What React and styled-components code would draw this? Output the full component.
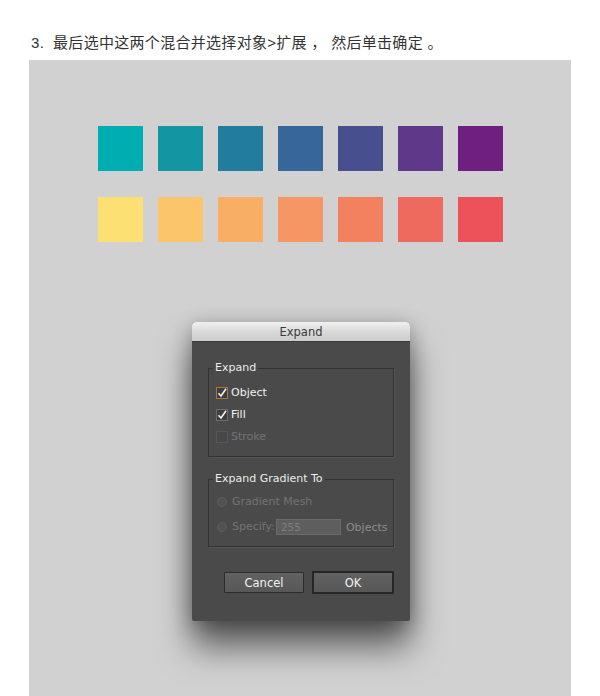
import React from "react";
import styled, { createGlobalStyle } from "styled-components";

const GlobalStyle = createGlobalStyle`
  body {
    margin: 0;
    background: #ffffff;
  }
`;

const topRow = ["#00adb0", "#1495a2", "#227c9e", "#37679a", "#474f8e", "#5f388a", "#6e1f80"];
const bottomRow = ["#fde073", "#fbc56c", "#f9ae65", "#f59664", "#f3815f", "#ef6a5e", "#ed525a"];

const Page = styled.div`
  padding: 34px 29px 0 29px;
`;

const Heading = styled.p`
  margin: 0 0 8px 2px;
  font-family: "Liberation Sans", "Noto Sans CJK SC", sans-serif;
  font-size: 15px;
  line-height: 18px;
  letter-spacing: 0.3px;
  color: #333333;
  white-space: pre;
`;

const Panel = styled.div`
  width: 542px;
  min-height: 636px;
  background: #d1d1d1;
  padding-top: 66px;
  box-sizing: border-box;
  display: flex;
  flex-direction: column;
  align-items: center;
`;

const SwatchGrid = styled.div`
  display: grid;
  grid-template-columns: repeat(7, 45px);
  grid-auto-rows: 45px;
  column-gap: 15px;
  row-gap: 26px;
  margin-left: 1px;
`;

const Swatch = styled.div`
  background: ${(p) => p.$color};
`;

const Dialog = styled.div`
  margin-top: 80px;
  margin-left: 2px;
  width: 218px;
  background: #4a4a4a;
  border-radius: 4px 4px 2px 2px;
  box-shadow: 0 26px 34px rgba(0, 0, 0, 0.55), 0 4px 20px rgba(0, 0, 0, 0.3);
  font-family: "DejaVu Sans", sans-serif;
  font-size: 11px;
  overflow: hidden;
`;

const TitleBar = styled.div`
  height: 20px;
  line-height: 20px;
  text-align: center;
  color: #3a3a3a;
  font-size: 11.5px;
  background: linear-gradient(#f0f0f0, #d6d6d6 60%, #cdcdcd);
  border-bottom: 1px solid #3a3a3a;
  box-sizing: border-box;
`;

const Body = styled.div`
  padding: 26px 16px 27px 16px;
  display: flex;
  flex-direction: column;
`;

const Group = styled.div`
  position: relative;
  border: 1px solid #333333;
  box-shadow: 1px 1px 0 #555555;
  padding: ${(p) => p.$pad};
  margin-bottom: ${(p) => p.$gap || 0}px;
  display: flex;
  flex-direction: column;
  gap: ${(p) => p.$rowGap}px;
`;

const Legend = styled.span`
  position: absolute;
  top: -9px;
  left: 4px;
  padding: 0 2px;
  background: #4a4a4a;
  color: #ececec;
  line-height: 16px;
`;

const Row = styled.div`
  height: 16px;
  display: flex;
  align-items: center;
  padding-left: 7px;
`;

const Box = styled.span`
  width: 12px;
  height: 12px;
  box-sizing: border-box;
  border: 1px solid ${(p) => (p.$focus ? "#a8773f" : p.$disabled ? "#575757" : "#6c6c6c")};
  background: ${(p) => (p.$disabled ? "#484848" : "#3e3e3e")};
  display: flex;
  align-items: center;
  justify-content: center;
  margin-right: 3px;
`;

const Radio = styled.span`
  width: 10px;
  height: 10px;
  border-radius: 50%;
  box-sizing: border-box;
  border: 1px solid #5c5c5c;
  background: #525252;
  margin: 0 5px 0 1px;
`;

const Label = styled.span`
  color: ${(p) => (p.$disabled ? "#737373" : "#f2f2f2")};
  line-height: 16px;
`;

const Field = styled.span`
  width: 65px;
  height: 16px;
  box-sizing: border-box;
  margin: 0 5px 0 1px;
  background: #5e5e5e;
  border: 1px solid #6a6a6a;
  color: #7e7e7e;
  font-size: 10.5px;
  line-height: 14px;
  padding-left: 4px;
`;

const Unit = styled.span`
  color: #8d8d8d;
`;

const Buttons = styled.div`
  margin-top: 24px;
  display: flex;
  justify-content: flex-end;
  align-items: center;
  gap: 8px;
`;

const Button = styled.div`
  width: ${(p) => (p.$primary ? 82 : 80)}px;
  height: ${(p) => (p.$primary ? 23 : 21)}px;
  box-sizing: border-box;
  border: ${(p) => (p.$primary ? "2px solid #262626" : "1px solid #2c2c2c")};
  background: linear-gradient(#626262, #575757);
  color: #f2f2f2;
  font-size: 11.5px;
  display: flex;
  align-items: center;
  justify-content: center;
  border-radius: 1px;
`;

const Check = () => (
  <svg width="10" height="10" viewBox="0 0 10 10">
    <path d="M1.5 5.2 L4 8 L9 0.8" fill="none" stroke="#f4f4f4" strokeWidth="1.6" />
  </svg>
);

export default function App() {
  return (
    <>
      <GlobalStyle />
      <Page>
        <Heading>{"3.  最后选中这两个混合并选择对象>扩展 ， 然后单击确定 。"}</Heading>
        <Panel>
          <SwatchGrid>
            {topRow.map((c) => (
              <Swatch key={c} $color={c} />
            ))}
            {bottomRow.map((c) => (
              <Swatch key={c} $color={c} />
            ))}
          </SwatchGrid>
          <Dialog>
            <TitleBar>Expand</TitleBar>
            <Body>
              <Group $pad="16px 0 11px 0" $rowGap={6} $gap={22}>
                <Legend>Expand</Legend>
                <Row>
                  <Box $focus>
                    <Check />
                  </Box>
                  <Label>Object</Label>
                </Row>
                <Row>
                  <Box>
                    <Check />
                  </Box>
                  <Label>Fill</Label>
                </Row>
                <Row>
                  <Box $disabled />
                  <Label $disabled>Stroke</Label>
                </Row>
              </Group>
              <Group $pad="14px 0 11px 0" $rowGap={9}>
                <Legend>Expand Gradient To</Legend>
                <Row>
                  <Radio />
                  <Label $disabled>Gradient Mesh</Label>
                </Row>
                <Row>
                  <Radio />
                  <Label $disabled>Specify:</Label>
                  <Field>255</Field>
                  <Unit>Objects</Unit>
                </Row>
              </Group>
              <Buttons>
                <Button>Cancel</Button>
                <Button $primary>OK</Button>
              </Buttons>
            </Body>
          </Dialog>
        </Panel>
      </Page>
    </>
  );
}
